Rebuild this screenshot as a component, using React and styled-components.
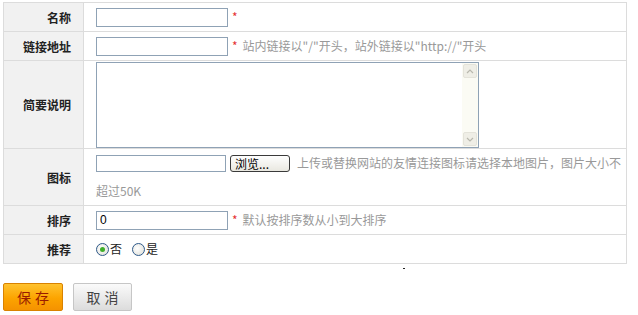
import * as React from 'react';
import styled, { createGlobalStyle, css } from 'styled-components';

const GlobalStyle = createGlobalStyle`
  body {
    margin: 0;
    background: #fff;
    font-family: "Noto Sans CJK SC", "Liberation Sans", sans-serif;
    font-size: 12px;
    color: #333;
  }
`;

const Page = styled.div`
  padding: 2px 0 0 3px;
  width: 626px;
  position: relative;
`;

const FormTable = styled.table`
  width: 624px;
  border-collapse: collapse;
  border: 1px solid #dcdcdc;
  td {
    border: 1px solid #dcdcdc;
    padding: 0;
  }
`;

const Label = styled.td`
  width: 67px;
  padding-right: 12px !important;
  background: #f1f1f1;
  text-align: right;
  font-weight: bold;
  color: #222;
  height: ${(p) => p.h}px;
`;

const Field = styled.td`
  padding: 0 0 0 12px !important;
  color: #999;
  line-height: 16px;
  vertical-align: ${(p) => (p.top ? 'top' : 'middle')};
`;

const FieldRow = styled.div`
  display: flex;
  align-items: center;
`;

const TextInput = styled.input`
  box-sizing: border-box;
  width: ${(p) => p.w || 132}px;
  height: ${(p) => p.h || 19}px;
  border: 1px solid #8fa2b5;
  padding: 0 3px;
  font-family: "Liberation Sans", sans-serif;
  font-size: 12px;
  color: #000;
  outline: none;
`;

const Star = styled.span`
  color: #e53333;
  font-size: 12px;
  margin: 0 5px 0 4px;
`;

const Hint = styled.span`
  color: #999;
  white-space: nowrap;
  margin-left: ${(p) => p.gap || 0}px;
`;

const AreaBox = styled.div`
  display: flex;
  width: 383px;
  height: 86px;
  box-sizing: border-box;
  border: 1px solid #8fa2b5;
  margin: 1px 0 0 0;
`;

const Area = styled.textarea`
  flex: 1;
  border: none;
  resize: none;
  outline: none;
  overflow: hidden;
`;

const ScrollTrack = styled.div`
  width: 16px;
  background: #fbfbf4;
  display: flex;
  flex-direction: column;
  justify-content: space-between;
  padding: 1px 0;
`;

const ScrollBtn = styled.div`
  width: 14px;
  height: 14px;
  margin-left: 1px;
  border-radius: 2px;
  background: #efeee6;
  border: 1px solid #e4e3da;
  box-sizing: border-box;
  display: flex;
  align-items: center;
  justify-content: center;
`;

const FileBtn = styled.button`
  box-sizing: border-box;
  width: 60px;
  height: 17px;
  padding: 0 0 0 4px;
  margin-left: 4px;
  border: 1px solid #3a3a3a;
  border-radius: 3px;
  background: linear-gradient(#fefefe, #e9e8e0);
  font-family: "Noto Sans CJK SC", sans-serif;
  font-size: 12px;
  color: #000;
  text-align: left;
  line-height: 13px;
`;

const IconCell = styled.div`
  line-height: 28px;
  & > ${FieldRow} {
    height: 28px;
  }
`;

const RadioRow = styled.div`
  display: flex;
  align-items: center;
  gap: 10px;
  line-height: 14px;
`;

const RadioGroup = styled.label`
  display: inline-flex;
  align-items: center;
  color: #222;
`;

const RadioDot = styled.span`
  width: 13px;
  height: 13px;
  box-sizing: border-box;
  border-radius: 50%;
  border: 1px solid #2f5a8a;
  background: radial-gradient(circle at 40% 40%, #fff, #dcdcd4);
  display: inline-flex;
  align-items: center;
  justify-content: center;
  margin-right: 1px;
  ${(p) =>
    p.checked &&
    css`
      &::after {
        content: '';
        width: 5px;
        height: 5px;
        border-radius: 50%;
        background: #3fae2a;
      }
    `}
`;

const Actions = styled.div`
  display: flex;
  gap: 10px;
  margin-top: 19px;
`;

const Button = styled.button`
  box-sizing: border-box;
  width: ${(p) => (p.primary ? 60 : 59)}px;
  height: 28px;
  border-radius: 2px;
  font-family: "Noto Sans CJK SC", sans-serif;
  font-size: 14px;
  letter-spacing: 4px;
  padding: 0 0 0 4px;
  border: 1px solid ${(p) => (p.primary ? '#d98200' : '#c6c6c6')};
  background: ${(p) =>
    p.primary
      ? 'linear-gradient(#ffc22e, #fca400 55%, #f59200)'
      : 'linear-gradient(#fafafa, #e8e8e8 60%, #dcdcdc)'};
  color: ${(p) => (p.primary ? '#9a1b00' : '#444')};
`;

const Speck = styled.span`
  position: absolute;
  left: 403px;
  top: 268px;
  width: 2px;
  height: 1px;
  background: #222;
`;

const Chevron = ({ up }) => (
  <svg width="8" height="5" viewBox="0 0 8 5">
    <path
      d={up ? 'M1 4 L4 1 L7 4' : 'M1 1 L4 4 L7 1'}
      stroke="#b9b8ae"
      strokeWidth="1.2"
      fill="none"
    />
  </svg>
);

export default function App() {
  return (
    <>
      <GlobalStyle />
      <Page>
        <FormTable>
          <tbody>
            <tr>
              <Label h={28}>名称</Label>
              <Field>
                <FieldRow>
                  <TextInput />
                  <Star>*</Star>
                </FieldRow>
              </Field>
            </tr>
            <tr>
              <Label h={28}>链接地址</Label>
              <Field>
                <FieldRow>
                  <TextInput />
                  <Star>*</Star>
                  <Hint>站内链接以"/"开头，站外链接以"http://"开头</Hint>
                </FieldRow>
              </Field>
            </tr>
            <tr>
              <Label h={85}>简要说明</Label>
              <Field>
                <AreaBox>
                  <Area />
                  <ScrollTrack>
                    <ScrollBtn>
                      <Chevron up />
                    </ScrollBtn>
                    <ScrollBtn>
                      <Chevron />
                    </ScrollBtn>
                  </ScrollTrack>
                </AreaBox>
              </Field>
            </tr>
            <tr>
              <Label h={56}>图标</Label>
              <Field top>
                <IconCell>
                  <FieldRow>
                    <TextInput w={130} h={17} />
                    <FileBtn>浏览...</FileBtn>
                    <Hint gap={7}>上传或替换网站的友情连接图标请选择本地图片，图片大小不</Hint>
                  </FieldRow>
                  <Hint>超过50K</Hint>
                </IconCell>
              </Field>
            </tr>
            <tr>
              <Label h={28}>排序</Label>
              <Field>
                <FieldRow>
                  <TextInput defaultValue="0" />
                  <Star>*</Star>
                  <Hint>默认按排序数从小到大排序</Hint>
                </FieldRow>
              </Field>
            </tr>
            <tr>
              <Label h={28}>推荐</Label>
              <Field>
                <RadioRow>
                  <RadioGroup>
                    <RadioDot checked />否
                  </RadioGroup>
                  <RadioGroup>
                    <RadioDot />是
                  </RadioGroup>
                </RadioRow>
              </Field>
            </tr>
          </tbody>
        </FormTable>
        <Actions>
          <Button primary>保存</Button>
          <Button>取消</Button>
        </Actions>
        <Speck />
      </Page>
    </>
  );
}
